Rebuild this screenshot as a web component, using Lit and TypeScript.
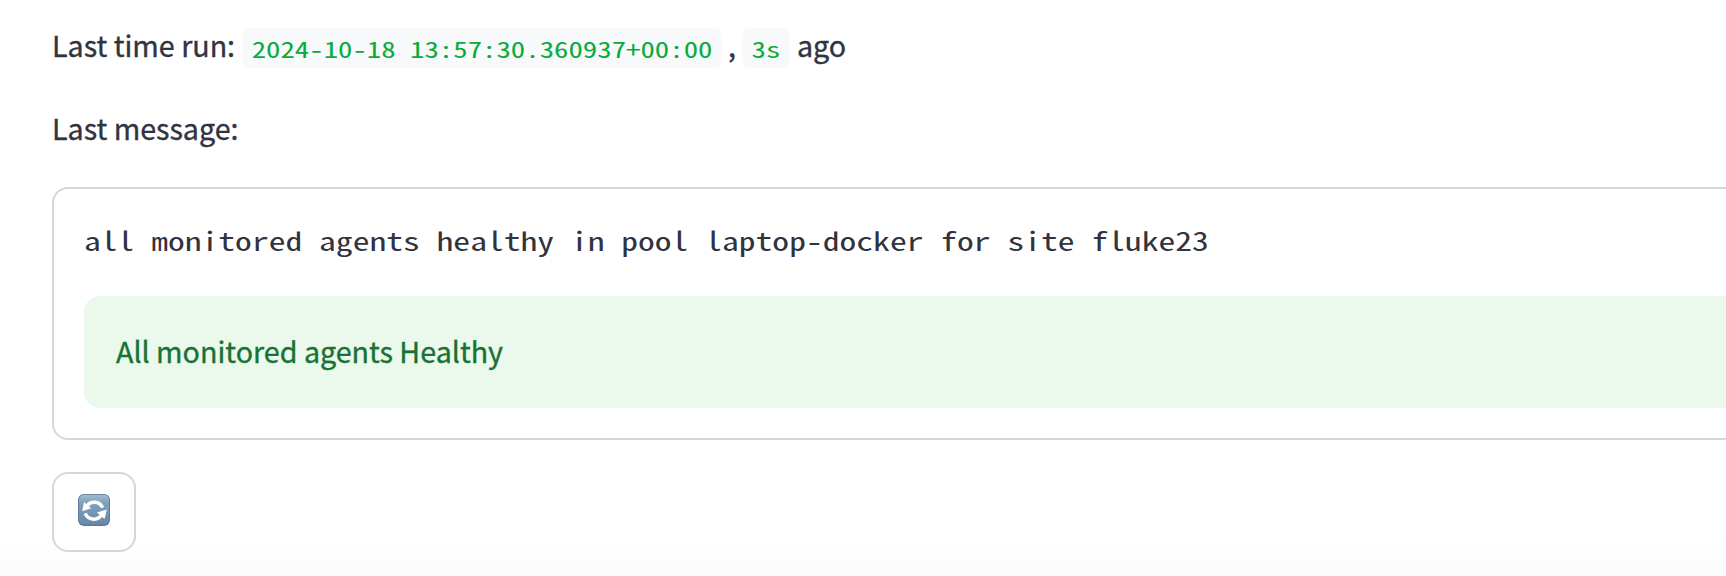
import { LitElement, html, css } from "lit";
import { customElement, property } from "lit/decorators.js";

@customElement("refresh-icon")
class RefreshIcon extends LitElement {
  static styles = css`
    :host { display: block; width: 32px; height: 32px; }
    .icon { display: block; }
  `;
  render() {
    return html`<svg class="icon" width="32" height="32" viewBox="0 0 32 32" aria-hidden="true">
      <defs>
        <linearGradient id="face" x1="0" y1="0" x2="0" y2="1">
          <stop offset="0" stop-color="#a3bccf" />
          <stop offset="0.25" stop-color="#82a2bd" />
          <stop offset="1" stop-color="#6688a8" />
        </linearGradient>
      </defs>
      <rect width="32" height="32" rx="6" fill="#58789a" />
      <rect x="0.9" y="0.7" width="30.2" height="30" rx="5.2" fill="url(#face)" />
      <g fill="none" stroke="#fff" stroke-width="3.5">
        <path d="M8.6 12.6C12 6.6 21.6 6.6 24.6 13.6" />
        <path d="M7.2 19.4C10.4 27 20.8 27 24.2 19.8" />
      </g>
      <path d="M6 8L13.2 14.2L4.2 17.2Z" fill="#fff" />
      <path d="M28.8 15.4L26.6 25L18.8 18.6Z" fill="#fff" />
    </svg>`;
  }
}

@customElement("app-root")
class AppRoot extends LitElement {
  @property() time = "2024-10-18 13:57:30.360937+00:00";
  @property() elapsed = "3s";
  @property() message = "all monitored agents healthy in pool laptop-docker for site fluke23";
  @property() status = "All monitored agents Healthy";

  static styles = css`
    :host {
      display: block;
      box-sizing: border-box;
      height: 576px;
      overflow: hidden;
      padding: 19px 0 0 52px;
      background: linear-gradient(#fff 538px, #fbfbfb 576px);
      color: #31333f;
      font-family: "Noto Sans CJK JP", "Noto Sans", sans-serif;
      font-size: 28.65px;
      -webkit-text-stroke: 0.35px currentColor;
    }
    .line { margin: 0; height: 51px; line-height: 51px; white-space: nowrap; }
    .run { display: flex; }
    .label { margin-top: 32px; }
    .code, .message {
      font-family: "Noto Sans Mono CJK JP", "Liberation Mono", monospace;
      -webkit-text-stroke: 0;
    }
    .code {
      box-sizing: border-box;
      height: 40px;
      margin-top: 9px;
      line-height: 37px;
      padding: 0 9.6px;
      border-radius: 8px;
      background: #f8f9fb;
      color: #09ab3b;
      font-size: 28.8px;
    }
    /* Wide, low monospace letterforms */
    .squat { display: block; transform: scaleY(0.78); transform-origin: 0 70%; }
    .first { margin-left: 7px; }
    .second { margin-left: 6px; }
    .comma { margin-left: 6px; }
    .ago { margin-left: 7px; }
    .card {
      box-sizing: border-box;
      height: 253px;
      margin-top: 34px;
      padding: 30px 0 0 30px;
      border: 2px solid #d6d6d8;
      border-right: 0;
      border-radius: 16px 0 0 16px;
    }
    .message { height: 45px; line-height: 38px; margin: 0; font-size: 33.6px; white-space: nowrap; }
    .alert {
      height: 112px;
      line-height: 110px;
      margin-top: 32px;
      padding-left: 32px;
      border-radius: 16px 0 0 16px;
      background: #ebf9ed;
      color: #177233;
    }
    .button {
      box-sizing: border-box;
      display: block;
      width: 84px;
      height: 80px;
      margin: 32px 0 0;
      padding: 20px 24px 24px;
      border: 2px solid #d6d6d8;
      border-radius: 16px;
      background: #fff;
    }
  `;

  render() {
    return html`
      <p class="line run">
        <span>Last time run:</span><code class="code first"><span class="squat">${this.time}</span></code>
        <span class="comma">,</span><code class="code second"><span class="squat">${this.elapsed}</span></code>
        <span class="ago">ago</span>
      </p>
      <p class="line label">Last message:</p>
      <section class="card">
        <p class="message"><span class="squat">${this.message}</span></p>
        <div class="alert" role="status">${this.status}</div>
      </section>
      <button class="button" aria-label="Refresh"><refresh-icon></refresh-icon></button>
    `;
  }
}
